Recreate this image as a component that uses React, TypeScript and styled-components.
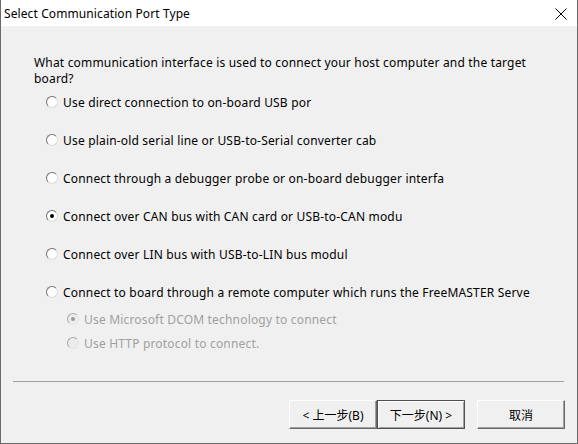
import React from "react";
import styled, { createGlobalStyle } from "styled-components";

const GlobalStyle = createGlobalStyle`
  html, body {
    margin: 0;
    padding: 0;
    background: #f0f0f0;
  }
  body {
    font-family: "Noto Sans", "Noto Sans CJK SC", sans-serif;
    font-size: 12px;
    color: #000;
  }
`;

const Window = styled.div`
  width: 578px;
  height: 444px;
  box-sizing: border-box;
  display: flex;
  flex-direction: column;
  background: #f0f0f0;
  border-left: 1px solid #6a6a6a;
  border-right: 1px solid #6a6a6a;
  border-bottom: 1px solid #6a6a6a;
`;

const TitleBar = styled.div`
  height: 26px;
  flex-shrink: 0;
  background: #fff;
  display: flex;
  align-items: center;
  justify-content: space-between;
  padding: 0 10px 0 3px;
  font-size: 12px;
  letter-spacing: 0.1px;
`;

const CloseIcon = styled.svg`
  width: 12px;
  height: 12px;
  margin-top: 1px;
`;

const Body = styled.div`
  flex: 1;
  display: flex;
  flex-direction: column;
  padding: 29px 0 0 33px;
  letter-spacing: 0.18px;
`;

const Question = styled.p`
  margin: 0;
  width: 510px;
  line-height: 16px;
`;

const Options = styled.div`
  display: flex;
  flex-direction: column;
  gap: 22px;
  margin-top: 7px;
  padding-left: 12px;
`;

const SubOptions = styled.div`
  display: flex;
  flex-direction: column;
  gap: 8px;
  margin-top: -11px;
  padding-left: 21px;
`;

const Row = styled.label<{ $disabled?: boolean }>`
  display: flex;
  align-items: center;
  gap: 5px;
  height: 16px;
  white-space: nowrap;
  color: ${(p) => (p.$disabled ? "#a0a0a0" : "#000")};
`;

const Radio = styled.span<{ $checked?: boolean; $disabled?: boolean }>`
  width: 12px;
  height: 12px;
  box-sizing: border-box;
  border-radius: 50%;
  border: 1px solid;
  border-color: ${(p) =>
    p.$disabled ? "#a8a8a8 #e4e4e4 #e4e4e4 #a8a8a8" : "#707070 #dcdcdc #dcdcdc #707070"};
  background: ${(p) => (p.$disabled ? "#ececec" : "#fff")};
  display: inline-flex;
  align-items: center;
  justify-content: center;
  flex-shrink: 0;

  &::after {
    content: "";
    width: 4px;
    height: 4px;
    border-radius: 50%;
    background: ${(p) => (p.$disabled ? "#9a9a9a" : "#000")};
    display: ${(p) => (p.$checked ? "block" : "none")};
  }
`;

const Separator = styled.div`
  margin: 0 13px 0 12px;
  height: 1px;
  background: #a0a0a0;
`;

const Footer = styled.div`
  display: flex;
  justify-content: flex-end;
  align-items: center;
  padding: 18px 12px 14px 0;
`;

const Button = styled.button<{ $default?: boolean; $gap?: number }>`
  width: 88px;
  height: 29px;
  margin-left: ${(p) => p.$gap ?? 0}px;
  box-sizing: border-box;
  font-family: "Noto Sans", "Noto Sans CJK SC", sans-serif;
  font-size: 12px;
  color: #000;
  background: #f0f0f0;
  padding: 0;
  border: 1px solid;
  border-color: ${(p) =>
    p.$default ? "#505050" : "#ffffff #696969 #696969 #ffffff"};
  box-shadow: ${(p) =>
    p.$default
      ? "inset 1px 1px 0 #fff, inset -1px -1px 0 #a0a0a0"
      : "inset -1px -1px 0 #a0a0a0"};
`;

const options = [
  "Use direct connection to on-board USB por",
  "Use plain-old serial line or USB-to-Serial converter cab",
  "Connect through a debugger probe or on-board debugger interfa",
  "Connect over CAN bus with CAN card or USB-to-CAN modu",
  "Connect over LIN bus with USB-to-LIN bus modul",
  "Connect to board through a remote computer which runs the FreeMASTER Serve",
];

const subOptions = [
  { label: "Use Microsoft DCOM technology to connect", checked: true },
  { label: "Use HTTP protocol to connect.", checked: false },
];

export default function App() {
  return (
    <>
      <GlobalStyle />
      <Window>
        <TitleBar>
          <span>Select Communication Port Type</span>
          <CloseIcon viewBox="0 0 12 12">
            <path d="M0.5 0.5 L11.5 11.5 M11.5 0.5 L0.5 11.5" stroke="#000" strokeWidth="1" />
          </CloseIcon>
        </TitleBar>
        <Body>
          <Question>
            What communication interface is used to connect your host computer and the target board?
          </Question>
          <Options>
            {options.map((label, i) => (
              <Row key={i}>
                <Radio $checked={i === 3} />
                {label}
              </Row>
            ))}
            <SubOptions>
              {subOptions.map((o, i) => (
                <Row key={i} $disabled>
                  <Radio $disabled $checked={o.checked} />
                  {o.label}
                </Row>
              ))}
            </SubOptions>
          </Options>
        </Body>
        <Separator />
        <Footer>
          <Button>&lt; 上一步(B)</Button>
          <Button $default>下一步(N) &gt;</Button>
          <Button $gap={12}>取消</Button>
        </Footer>
      </Window>
    </>
  );
}
